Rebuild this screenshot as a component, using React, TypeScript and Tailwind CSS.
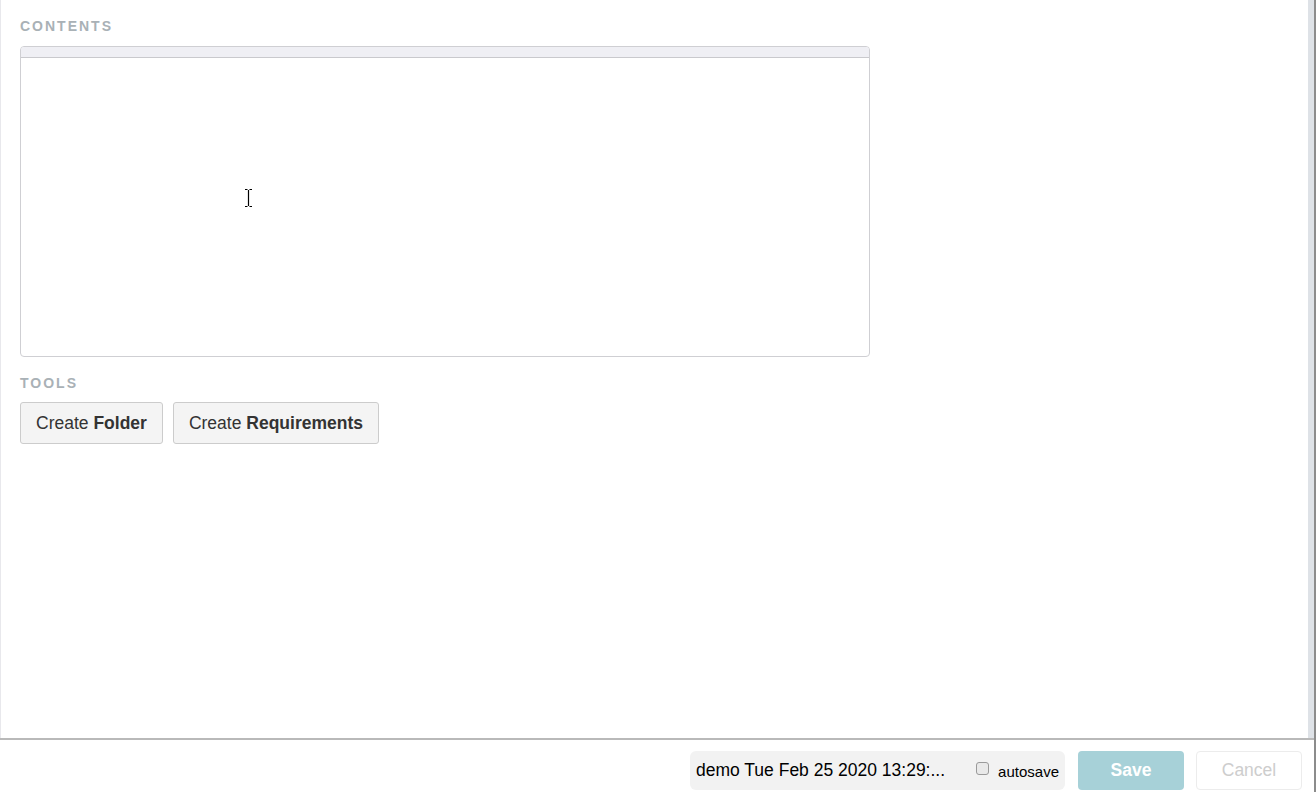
import React from "react";

export default function App() {
  return (
    <div className="w-[1316px] h-[792px] flex bg-white overflow-hidden font-['Liberation_Sans',Arial,sans-serif] text-[#333]">
      <div className="flex-1 flex flex-col min-w-0">
        <div className="flex-1 flex min-h-0">
          <main className="relative flex-1 border-l border-[#e8e8ec] pl-[19px] pt-[18px]">
            <div className="text-[14px] leading-[16px] font-bold tracking-[2px] text-[#a9b1b6]">CONTENTS</div>
            <div className="mt-[12px] w-[850px] h-[311px] border border-[#cfcfd3] rounded-[4px] overflow-hidden">
              <div className="h-[11px] bg-[#efeff4] border-b border-[#c9c9cd]" />
            </div>
            <div className="mt-[18px] text-[14px] leading-[16px] font-bold tracking-[2px] text-[#a9b1b6]">TOOLS</div>
            <div className="mt-[11px] flex gap-[10px]">
              <button className="h-[42px] px-[15px] bg-[#f4f4f4] border border-[#cccccc] rounded-[3px] text-[17.5px] text-[#333]">
                Create <span className="font-bold">Folder</span>
              </button>
              <button className="h-[42px] px-[15px] bg-[#f4f4f4] border border-[#cccccc] rounded-[3px] text-[17.5px] text-[#333]">
                Create <span className="font-bold">Requirements</span>
              </button>
            </div>
            <svg className="absolute left-[243px] top-[188px]" width="9" height="20" viewBox="0 0 9 20">
              <path d="M1 1.5h2.5M5.5 1.5H8M4.5 2v16M1 18.5h2.5M5.5 18.5H8" stroke="#000" strokeWidth="1.2" fill="none" />
            </svg>
          </main>
          <div className="w-[6px] bg-[#dee2e7]" />
        </div>
        <footer className="h-[54px] border-t-2 border-[#b9b9b9] flex items-start justify-end pt-[11px] pr-[12px]">
          <div className="h-[39px] w-[375px] bg-[#f2f2f2] rounded-[6px] flex items-center pl-[6px] pr-[6px]">
            <span className="text-[17.5px] text-black whitespace-nowrap">demo Tue Feb 25 2020 13:29:...</span>
            <div className="ml-auto flex items-center gap-[9px] pt-[3px]">
              <span className="w-[13px] h-[13px] rounded-[3px] border border-[#9a9a9a] bg-[#e9e9e9] -mt-[7px]" />
              <span className="text-[15px] text-black">autosave</span>
            </div>
          </div>
          <button className="ml-[13px] h-[39px] w-[106px] rounded-[4px] bg-[#a7d1d8] text-white text-[17.5px] font-bold">
            Save
          </button>
          <button className="ml-[12px] h-[39px] w-[106px] rounded-[4px] border border-[#ececec] bg-white text-[#cdcdcd] text-[17.5px]">
            Cancel
          </button>
        </footer>
      </div>
      <div className="w-[2px] bg-[#8c8c8c]" />
    </div>
  );
}
